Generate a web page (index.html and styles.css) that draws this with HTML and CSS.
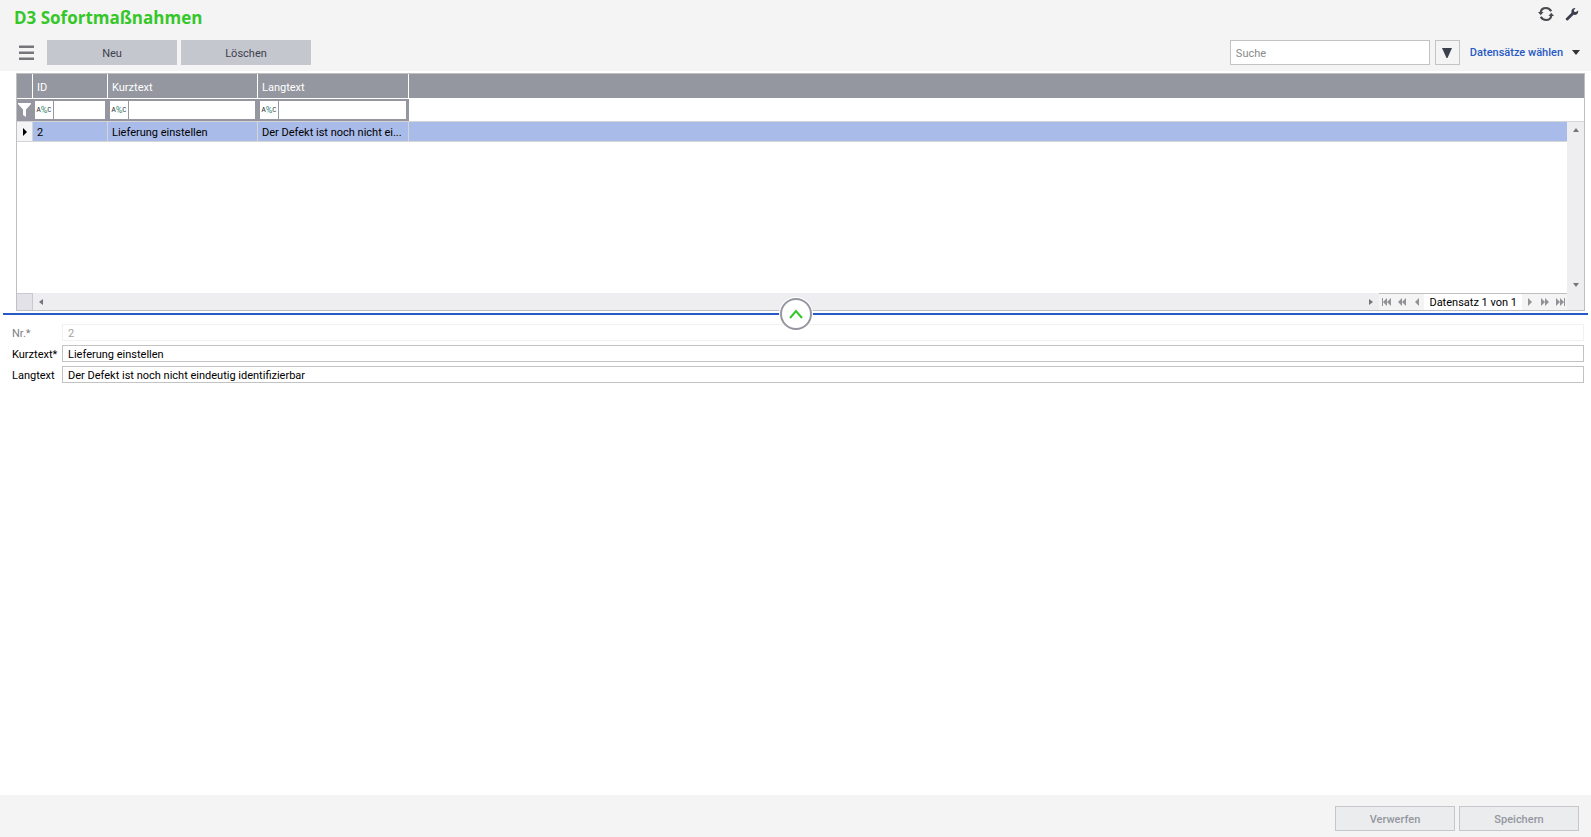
FILE: index.html
```html
<!DOCTYPE html>
<html lang="de">
<head>
    <meta charset="UTF-8">
    <meta name="viewport" content="width=device-width, initial-scale=1.0">
    <title>D3 Sofortmaßnahmen</title>
    <link rel="stylesheet" href="styles.css">
</head>
<body>

<header class="header">
    <div class="title-row">
        <h1 class="title">D3 Sofortmaßnahmen</h1>
        <div class="tools">
            <button type="button" class="icon-btn" aria-label="Aktualisieren">
                <svg width="16" height="16" viewBox="0 0 16 16" fill="none" stroke="#4a4b50" stroke-width="2.200">
                    <path d="M13.200 5.200C12 2.900 10.200 2 8 2 5.200 2 3 3.800 2.700 6.500"/>
                    <path d="M2.800 10.800C4 13.100 5.800 14 8 14c2.800 0 5-1.800 5.300-4.500"/>
                    <path d="M0 6h5.600L2.700 9.200zM16 10h-5.600l2.900-3.200z" fill="#4a4b50" stroke="none"/>
                </svg>
            </button>
            <button type="button" class="icon-btn" aria-label="Einstellungen">
                <svg width="14" height="14" viewBox="0 0 14 14" fill="#3c3f4c">
                    <path d="M10.500 1 8.900 3.300l.3 1.500 1.600.3L13.200 3.600c.3 2.800-1.700 4.900-4.600 4.200L3 13.200c-1.400.9-3-.6-2-2L6.500 5.700C5.900 2.900 7.800.700 10.500 1z"/>
                </svg>
            </button>
        </div>
    </div>

    <div class="toolbar">
        <button type="button" class="menu-btn" aria-label="Menü">
            <svg width="15" height="16" viewBox="0 0 15 16" fill="#75767a">
                <path d="M0 .5h15V3H0zM0 6.500h15V9H0zM0 12.500h15V15H0z"/>
            </svg>
        </button>
        <button type="button" class="btn">Neu</button>
        <button type="button" class="btn">Löschen</button>
        <input type="search" class="search" placeholder="Suche" aria-label="Suche">
        <button type="button" class="filter-btn" aria-label="Filter">
            <svg width="10" height="10" viewBox="0 0 10 10" fill="#3c3f4c"><path d="M0 0h10L5.500 10h-1z"/></svg>
        </button>
        <a href="#" class="select-link">Datensätze wählen
            <svg width="8" height="5" viewBox="0 0 8 5" fill="#333"><path d="M0 0h8L4 5z"/></svg>
        </a>
    </div>
</header>

<main class="main">
    <section class="grid">
        <table class="table">
            <colgroup>
                <col class="col-mark">
                <col class="col-id">
                <col class="col-text">
                <col class="col-long">
                <col>
                <col class="col-scroll">
            </colgroup>
            <thead>
                <tr class="head-row">
                    <th></th>
                    <th>ID</th>
                    <th>Kurztext</th>
                    <th>Langtext</th>
                    <th colspan="2"></th>
                </tr>
                <tr class="filter-row">
                    <td class="filter-mark">
                        <svg width="14" height="16" viewBox="0 0 14 16" fill="#fff"><path d="M0 1h13v1L8 7.500V15l-3-2V7.500L0 2z"/></svg>
                    </td>
                    <td class="filter-cell">
                        <div class="filter-box">
                            <span class="op">A<i>%</i>C</span>
                            <input type="text" aria-label="Filter ID">
                        </div>
                    </td>
                    <td class="filter-cell">
                        <div class="filter-box">
                            <span class="op">A<i>%</i>C</span>
                            <input type="text" aria-label="Filter Kurztext">
                        </div>
                    </td>
                    <td class="filter-cell">
                        <div class="filter-box">
                            <span class="op">A<i>%</i>C</span>
                            <input type="text" aria-label="Filter Langtext">
                        </div>
                    </td>
                    <td colspan="2"></td>
                </tr>
            </thead>
            <tbody>
                <tr class="data-row">
                    <td class="mark">
                        <svg width="4" height="8" viewBox="0 0 4 8"><path d="M0 0l4 4-4 4z"/></svg>
                    </td>
                    <td>2</td>
                    <td>Lieferung einstellen</td>
                    <td>Der Defekt ist noch nicht ei...</td>
                    <td></td>
                    <td class="scroll-cell" rowspan="2">
                        <div class="scroll-y">
                            <svg width="6" height="4" viewBox="0 0 6 4" fill="#757579"><path d="M3 0l3 4H0z"/></svg>
                            <svg width="6" height="4" viewBox="0 0 6 4" fill="#757579"><path d="M0 0h6L3 4z"/></svg>
                        </div>
                    </td>
                </tr>
                <tr class="empty-row">
                    <td colspan="5"></td>
                </tr>
            </tbody>
        </table>

        <div class="status">
            <div class="corner"></div>
            <div class="scroll-x">
                <svg width="4" height="6" viewBox="0 0 4 6" fill="#757579"><path d="M4 0v6L0 3z"/></svg>
                <svg width="4" height="6" viewBox="0 0 4 6" fill="#757579"><path d="M0 0v6l4-3z"/></svg>
            </div>
            <div class="pager">
                <button type="button" class="page-btn" aria-label="Erster Datensatz">
                    <svg width="10" height="8" viewBox="0 0 10 8" fill="#929297"><path d="M0 0h1v8H0zM5 0v8L1 4zM9 0v8L5 4z"/></svg>
                </button>
                <button type="button" class="page-btn" aria-label="Seite zurück">
                    <svg width="8" height="8" viewBox="0 0 8 8" fill="#929297"><path d="M4 0v8L0 4zM8 0v8L4 4z"/></svg>
                </button>
                <button type="button" class="page-btn" aria-label="Vorheriger Datensatz">
                    <svg width="4" height="8" viewBox="0 0 4 8" fill="#929297"><path d="M4 0v8L0 4z"/></svg>
                </button>
                <span class="page-text">Datensatz 1 von 1</span>
                <button type="button" class="page-btn" aria-label="Nächster Datensatz">
                    <svg width="4" height="8" viewBox="0 0 4 8" fill="#929297"><path d="M0 0v8l4-4z"/></svg>
                </button>
                <button type="button" class="page-btn" aria-label="Seite vor">
                    <svg width="8" height="8" viewBox="0 0 8 8" fill="#929297"><path d="M0 0v8l4-4zM4 0v8l4-4z"/></svg>
                </button>
                <button type="button" class="page-btn" aria-label="Letzter Datensatz">
                    <svg width="10" height="8" viewBox="0 0 10 8" fill="#929297"><path d="M1 0v8l4-4zM5 0v8l4-4zM9 0h1v8H9z"/></svg>
                </button>
            </div>
        </div>
    </section>

    <!-- Splitter between list and form -->
    <div class="splitter">
        <button type="button" class="collapse-btn" aria-label="Einklappen">
            <svg width="14" height="10" viewBox="0 0 14 10" fill="none" stroke="#34c728" stroke-width="2"><path d="M1 9l6-7 6 7"/></svg>
        </button>
    </div>

    <form class="form" id="record-form">
        <label for="nr" class="disabled">Nr.*</label>
        <input type="text" id="nr" value="2" disabled>
        <label for="kurztext">Kurztext*</label>
        <input type="text" id="kurztext" value="Lieferung einstellen">
        <label for="langtext">Langtext</label>
        <input type="text" id="langtext" value="Der Defekt ist noch nicht eindeutig identifizierbar">
    </form>
</main>

<footer class="footer">
    <button type="reset" form="record-form" class="btn-footer" disabled>Verwerfen</button>
    <button type="submit" form="record-form" class="btn-footer" disabled>Speichern</button>
</footer>

</body>
</html>
```
FILE: styles.css
```css
* {
    margin: 0;
    padding: 0;
    box-sizing: border-box;
}

body {
    display: flex;
    flex-direction: column;
    min-height: 100vh;
    background: #fff;
    color: #000;
    font-family: Roboto, 'Open Sans', sans-serif;
    font-size: 11px;
    line-height: 15px;
}

button, input {
    font: inherit;
    color: inherit;
    border: none;
    background: none;
    border-radius: 0;
    outline: none;
}

button {
    cursor: pointer;
}

svg {
    display: block;
    flex: none;
}

/* Header */
.header {
    background: #f4f4f4;
    padding-bottom: 6px;
}

.title-row {
    display: flex;
    justify-content: space-between;
    height: 40px;
    padding: 6px 12px 0 14px;
}

.title {
    font-family: 'Open Sans', 'Noto Sans', sans-serif;
    font-size: 17px;
    line-height: 24px;
    font-weight: bold;
    color: #34c728;
}

.tools {
    display: flex;
    gap: 11px;
    height: 16px;
    align-items: center;
}

.toolbar {
    display: flex;
    align-items: center;
    height: 25px;
    padding: 0 11px 0 19px;
}

.menu-btn {
    margin-right: 13px;
}

.btn {
    width: 130px;
    height: 25px;
    margin-right: 4px;
    padding-top: 2px;
    background: #c5c7cf;
    color: #3c3f4c;
}

.search {
    width: 200px;
    height: 25px;
    margin-left: auto;
    padding: 2px 5px 0;
    border: 1px solid #c3c3c3;
    background: #fff;
}

.search::placeholder {
    color: #8a8a8a;
}

.filter-btn {
    display: flex;
    align-items: center;
    justify-content: center;
    width: 25px;
    height: 25px;
    margin: 0 10px 0 5px;
    border: 1px solid #c3c3c3;
}

.select-link {
    display: flex;
    align-items: center;
    gap: 9px;
    color: #2759c5;
    font-weight: 500;
    line-height: 17px;
    text-decoration: none;
}

/* Grid */
.main {
    flex: 1;
}

.grid {
    margin: 2px 6px 0 16px;
    border: 1px solid #c0c0c0;
}

.table {
    width: 100%;
    table-layout: fixed;
    border-collapse: separate;
    border-spacing: 0;
}

.col-mark {
    width: 16px;
}

.col-id {
    width: 75px;
}

.col-text {
    width: 150px;
}

.col-long {
    width: 151px;
}

.col-scroll {
    width: 17px;
}

.head-row th {
    height: 25px;
    padding: 2px 4px 0;
    background: #94979f;
    border-right: 1px solid #fff;
    border-bottom: 1px solid #fff;
    color: #fff;
    font-weight: normal;
    text-align: left;
}

.head-row th:last-child {
    border-right: none;
}

.filter-row td {
    height: 23px;
    border-bottom: 1px solid #d5d5d8;
}

.filter-row .filter-mark {
    background: #94979f;
    padding-left: 1px;
}

.filter-row .filter-cell {
    background: #94979f;
    padding: 0 3px 0 2px;
}

.filter-box {
    display: flex;
    height: 18px;
    background: #fff;
}

.op {
    display: flex;
    justify-content: center;
    width: 19px;
    border-right: 1px solid #94979f;
    color: #333;
    font-family: 'Liberation Mono', monospace;
    font-size: 7px;
    line-height: 18px;
}

.op i {
    color: #2f8a74;
    font-family: Roboto, sans-serif;
    font-size: 9px;
    font-style: normal;
}

.filter-box input {
    flex: 1;
    min-width: 0;
}

.data-row td {
    height: 20px;
    padding: 2px 4px 0;
    background: #a9bbe9;
    border-right: 1px solid #d5d5d8;
    border-bottom: 1px solid #d5d5d8;
    white-space: nowrap;
    overflow: hidden;
    text-overflow: ellipsis;
}

.data-row .mark {
    background: #f4f4f6;
    padding: 0 0 0 6px;
}

.data-row td:nth-child(5) {
    border-right: none;
}

.data-row .scroll-cell {
    padding: 0;
    border: none;
    background: #eeeef0;
}

.scroll-y {
    display: flex;
    flex-direction: column;
    justify-content: space-between;
    align-items: center;
    height: 171px;
    padding: 6px 0;
}

.empty-row td {
    height: 151px;
}

.status {
    display: flex;
    height: 17px;
    background: #eeeef0;
}

.corner {
    width: 16px;
    background: #e2e2e8;
    border: 1px solid #c9c9d2;
    border-left: none;
    border-bottom: none;
}

.scroll-x {
    flex: 1;
    display: flex;
    align-items: center;
    justify-content: space-between;
    padding: 0 6px;
}

.pager {
    display: flex;
    align-items: center;
    margin-right: 17px;
    border-top: 1px solid #c0c0c0;
    background: #f4f4f4;
}

.page-btn {
    display: flex;
    align-items: center;
    justify-content: center;
    width: 15px;
    height: 16px;
}

.page-text {
    height: 16px;
    padding: 0 5px;
    background: #fff;
    line-height: 18px;
}

/* Splitter */
.splitter {
    position: relative;
    height: 2px;
    margin: 2px 3px 0;
    background: #2759c5;
}

.collapse-btn {
    position: absolute;
    left: 50%;
    top: 50%;
    transform: translate(-50%, -50%);
    display: flex;
    align-items: center;
    justify-content: center;
    width: 32px;
    height: 32px;
    border: 2px solid #94979f;
    border-radius: 50%;
    background: #fff;
    box-shadow: 0 0 0 1px #fff;
}

/* Form */
.form {
    display: grid;
    grid-template-columns: 50px 1fr;
    row-gap: 4px;
    align-items: center;
    padding: 9px 7px 0 12px;
}

.form label {
    height: 17px;
    line-height: 19px;
}

.form input {
    height: 17px;
    padding: 2px 5px 0;
    border: 1px solid #c3c3c3;
    background: #fff;
    line-height: 13px;
}

.form input:disabled {
    border-color: #f1f1f1;
    color: #a3a3a3;
}

.form .disabled {
    color: #808080;
}

/* Footer */
.footer {
    display: flex;
    justify-content: flex-end;
    gap: 4px;
    padding: 11px 12px 6px;
    background: #f4f4f4;
}

.btn-footer {
    width: 120px;
    height: 25px;
    padding-top: 2px;
    border: 1px solid #c5c7cb;
    background: #ebecee;
    color: #94979f;
    font-weight: 500;
    cursor: default;
}
```
